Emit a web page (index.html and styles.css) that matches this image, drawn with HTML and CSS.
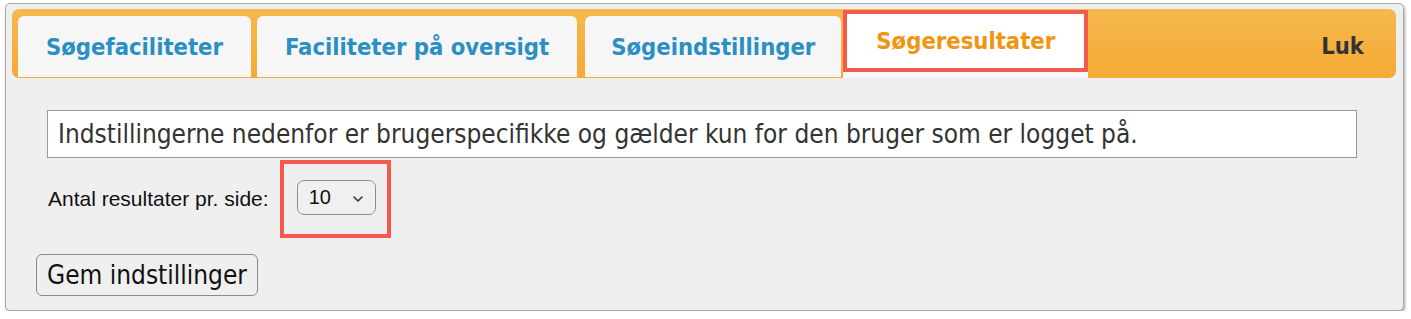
FILE: index.html
```html
<!DOCTYPE html>
<html lang="da">
<head>
<meta charset="utf-8">
<title>Søgeresultater</title>
<link rel="stylesheet" href="styles.css">
</head>
<body>
<div class="panel">
  <div class="tabbar">
    <div class="tab">Søgefaciliteter</div>
    <div class="tab">Faciliteter på oversigt</div>
    <div class="tab tab-narrow">Søgeindstillinger</div>
    <div class="tab active">Søgeresultater</div>
    <div class="close">Luk</div>
  </div>
  <div class="content">
    <div class="info">Indstillingerne nedenfor er brugerspecifikke og gælder kun for den bruger som er logget på.</div>
    <div class="row">
      <span class="label">Antal resultater pr. side:</span>
      <span class="mark">
        <span class="select"><span>10</span>
          <svg class="chev" width="10" height="6" viewBox="0 0 10 6"><path d="M1 1 L5 5 L9 1" fill="none" stroke="#333" stroke-width="1.6" stroke-linecap="round" stroke-linejoin="round"/></svg>
        </span>
      </span>
    </div>
    <button class="save">Gem indstillinger</button>
  </div>
</div>
</body>
</html>
```
FILE: styles.css
```css
html, body { margin: 0; padding: 0; background: #ffffff; }
.panel {
  margin: 3px 7px 0 5px;
  height: 308px;
  box-sizing: border-box;
  border: 1px solid #a8a8a8;
  border-radius: 5px;
  background: #efefef;
  box-shadow: 1px 2px 3px rgba(0,0,0,0.35);
  padding: 5px 7px 0 6px;
}
.tabbar {
  display: flex;
  align-items: flex-end;
  height: 69px;
  box-sizing: border-box;
  background: linear-gradient(#f6b84d, #f4aa35);
  border-radius: 7px;
  padding: 7px 6px 0 6px;
  gap: 6px;
  font-family: "DejaVu Sans Condensed", "DejaVu Sans", sans-serif;
  font-weight: bold;
  font-size: 23.6px;
}
.tab {
  height: 61px;
  margin-bottom: 1px;
  box-sizing: border-box;
  display: flex;
  align-items: center;
  padding: 0 28px;
  background: #f6f6f6;
  border-radius: 6px 6px 0 0;
  color: #2a8fc2;
}
.tab-narrow { padding: 0 26px; margin-left: 2px; }
.tab.active {
  background: #ffffff;
  color: #f0950f;
  border: 4px solid #f5584c;
  border-radius: 0;
  height: 62px;
  margin-bottom: 6px;
  margin-left: -4px;
  padding: 0 29px;
  box-shadow: 0 6px 0 0 #f7f7f7;
}
.close {
  margin-left: auto;
  align-self: center;
  padding-right: 26px;
  color: #333333;
  margin-bottom: 2px;
}
.content {
  padding: 32px 39px 0 24px;
}
.info {
  margin-left: 11px;
  background: #ffffff;
  border: 1px solid #9a9a9a;
  height: 48px;
  box-sizing: border-box;
  display: flex;
  align-items: center;
  padding-left: 10px;
  font-family: "DejaVu Sans Condensed", "DejaVu Sans", sans-serif;
  font-size: 26px;
  color: #333333;
}
.row {
  display: flex;
  align-items: center;
  margin-top: 2px;
  margin-left: 12px;
}
.label {
  font-family: "Liberation Sans", Arial, sans-serif;
  font-size: 21px;
  color: #111111;
}
.mark {
  margin-left: 11px;
  border: 4px solid #f5584c;
  padding: 16px 11px 19px 13px;
  display: inline-flex;
}
.select {
  width: 79px;
  height: 35px;
  box-sizing: border-box;
  border: 1px solid #8e8e8e;
  border-radius: 7px;
  background: #f0f0f0;
  display: flex;
  align-items: center;
  justify-content: space-between;
  padding: 0 12px 0 11px;
  font-family: "Liberation Sans", Arial, sans-serif;
  font-size: 20px;
  color: #111;
}
.chev { margin-top: 2px; }
.save {
  display: block;
  margin-top: 16px;
  height: 42px;
  padding: 0 10px;
  border: 1px solid #8a8a8a;
  border-radius: 6px;
  background: #efefef;
  font-family: "DejaVu Sans Condensed", "DejaVu Sans", sans-serif;
  font-size: 26px;
  color: #111;
}
```
